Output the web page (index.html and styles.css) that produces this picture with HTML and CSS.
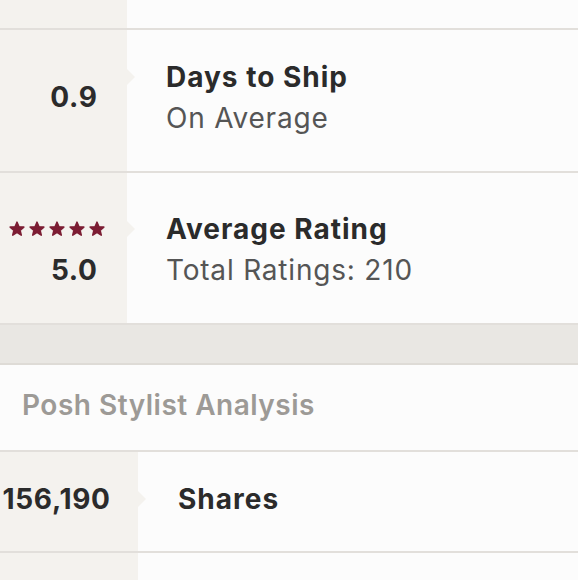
FILE: index.html
```html
<!DOCTYPE html>
<html>
<head>
<meta charset="utf-8">
<link rel="stylesheet" href="styles.css">
</head>
<body>
<div class="page">
  <div class="row row-top">
    <div class="val-col"></div>
    <div class="info-col"></div>
  </div>
  <div class="row row-ship">
    <div class="val-col">
      <div class="val">0.9</div>
    </div>
    <div class="info-col">
      <div class="title">Days to Ship</div>
      <div class="sub">On Average</div>
    </div>
  </div>
  <div class="row row-rating">
    <div class="val-col">
      <div class="stars">
        <svg viewBox="0 0 20 20"><polygon points="10,1.5 12.4,7.2 18.5,7.6 13.8,11.6 15.3,17.6 10,14.3 4.7,17.6 6.2,11.6 1.5,7.6 7.6,7.2"/></svg>
        <svg viewBox="0 0 20 20"><polygon points="10,1.5 12.4,7.2 18.5,7.6 13.8,11.6 15.3,17.6 10,14.3 4.7,17.6 6.2,11.6 1.5,7.6 7.6,7.2"/></svg>
        <svg viewBox="0 0 20 20"><polygon points="10,1.5 12.4,7.2 18.5,7.6 13.8,11.6 15.3,17.6 10,14.3 4.7,17.6 6.2,11.6 1.5,7.6 7.6,7.2"/></svg>
        <svg viewBox="0 0 20 20"><polygon points="10,1.5 12.4,7.2 18.5,7.6 13.8,11.6 15.3,17.6 10,14.3 4.7,17.6 6.2,11.6 1.5,7.6 7.6,7.2"/></svg>
        <svg viewBox="0 0 20 20"><polygon points="10,1.5 12.4,7.2 18.5,7.6 13.8,11.6 15.3,17.6 10,14.3 4.7,17.6 6.2,11.6 1.5,7.6 7.6,7.2"/></svg>
      </div>
      <div class="val">5.0</div>
    </div>
    <div class="info-col">
      <div class="title">Average Rating</div>
      <div class="sub">Total Ratings: 210</div>
    </div>
  </div>
  <div class="band"></div>
  <div class="section-head">Posh Stylist Analysis</div>
  <div class="row row-shares wide">
    <div class="val-col">
      <div class="val">156,190</div>
    </div>
    <div class="info-col">
      <div class="title">Shares</div>
    </div>
  </div>
  <div class="row row-next wide">
    <div class="val-col"></div>
    <div class="info-col"></div>
  </div>
</div>
</body>
</html>
```

FILE: styles.css
```css
html, body {
  margin: 0;
  padding: 0;
  background: #fcfcfc;
}
.page {
  width: 578px;
  height: 580px;
  overflow: hidden;
  font-family: "Inter", "Liberation Sans", sans-serif;
  color: #2b2b2b;
}
.row {
  display: flex;
  border-bottom: 2px solid #e2dfdb;
  background: #fcfcfc;
}
.val-col {
  width: 127px;
  flex: none;
  background: #f4f2ee;
  box-sizing: border-box;
  padding-right: 30px;
  display: flex;
  flex-direction: column;
  justify-content: center;
  align-items: flex-end;
}
.wide .val-col {
  width: 138px;
  padding-right: 28px;
}
.info-col {
  flex: 1;
  padding-left: 39px;
  display: flex;
  flex-direction: column;
  justify-content: center;
}
.wide .info-col {
  padding-left: 40px;
}
.row-top { height: 28px; }
.row-ship { height: 141px; }
.row-ship .val-col,
.row-ship .info-col { padding-bottom: 6px; }
.row-rating { height: 150px; }
.row-rating .val-col,
.row-rating .info-col { padding-top: 3px; }
.row-shares { height: 99px; }
.row-shares .val-col,
.row-shares .info-col { padding-bottom: 5px; }
.row-next { height: 40px; border-bottom: none; }

.val {
  font-size: 28px;
  font-weight: 700;
  line-height: 41px;
  letter-spacing: 0.7px;
  margin-right: -0.7px;
}
.title {
  position: relative;
  font-size: 28px;
  font-weight: 700;
  line-height: 41px;
  letter-spacing: 1px;
}
.title::before {
  content: "";
  position: absolute;
  left: -39px;
  top: 50%;
  margin-top: -8px;
  border-left: 8px solid #f4f2ee;
  border-top: 8px solid transparent;
  border-bottom: 8px solid transparent;
}
.wide .title::before { left: -40px; }
.sub {
  font-size: 28px;
  font-weight: 400;
  line-height: 41px;
  color: #555555;
  letter-spacing: 0.8px;
}
.stars {
  display: flex;
  gap: 4px;
  height: 41px;
  align-items: center;
  margin-right: -8px;
}
.stars svg {
  width: 16px;
  height: 16px;
  fill: #7c1d33;
  stroke: #7c1d33;
  stroke-width: 2;
  stroke-linejoin: round;
}
.band {
  height: 38px;
  background: #e9e7e3;
  border-bottom: 2px solid #dedbd6;
}
.section-head {
  border-bottom: 2px solid #e2dfdb;
  box-sizing: border-box;
  height: 87px;
  display: flex;
  align-items: center;
  padding-left: 22px;
  padding-bottom: 5px;
  font-size: 28px;
  font-weight: 600;
  color: #9d9a96;
  letter-spacing: 0.5px;
}
```
